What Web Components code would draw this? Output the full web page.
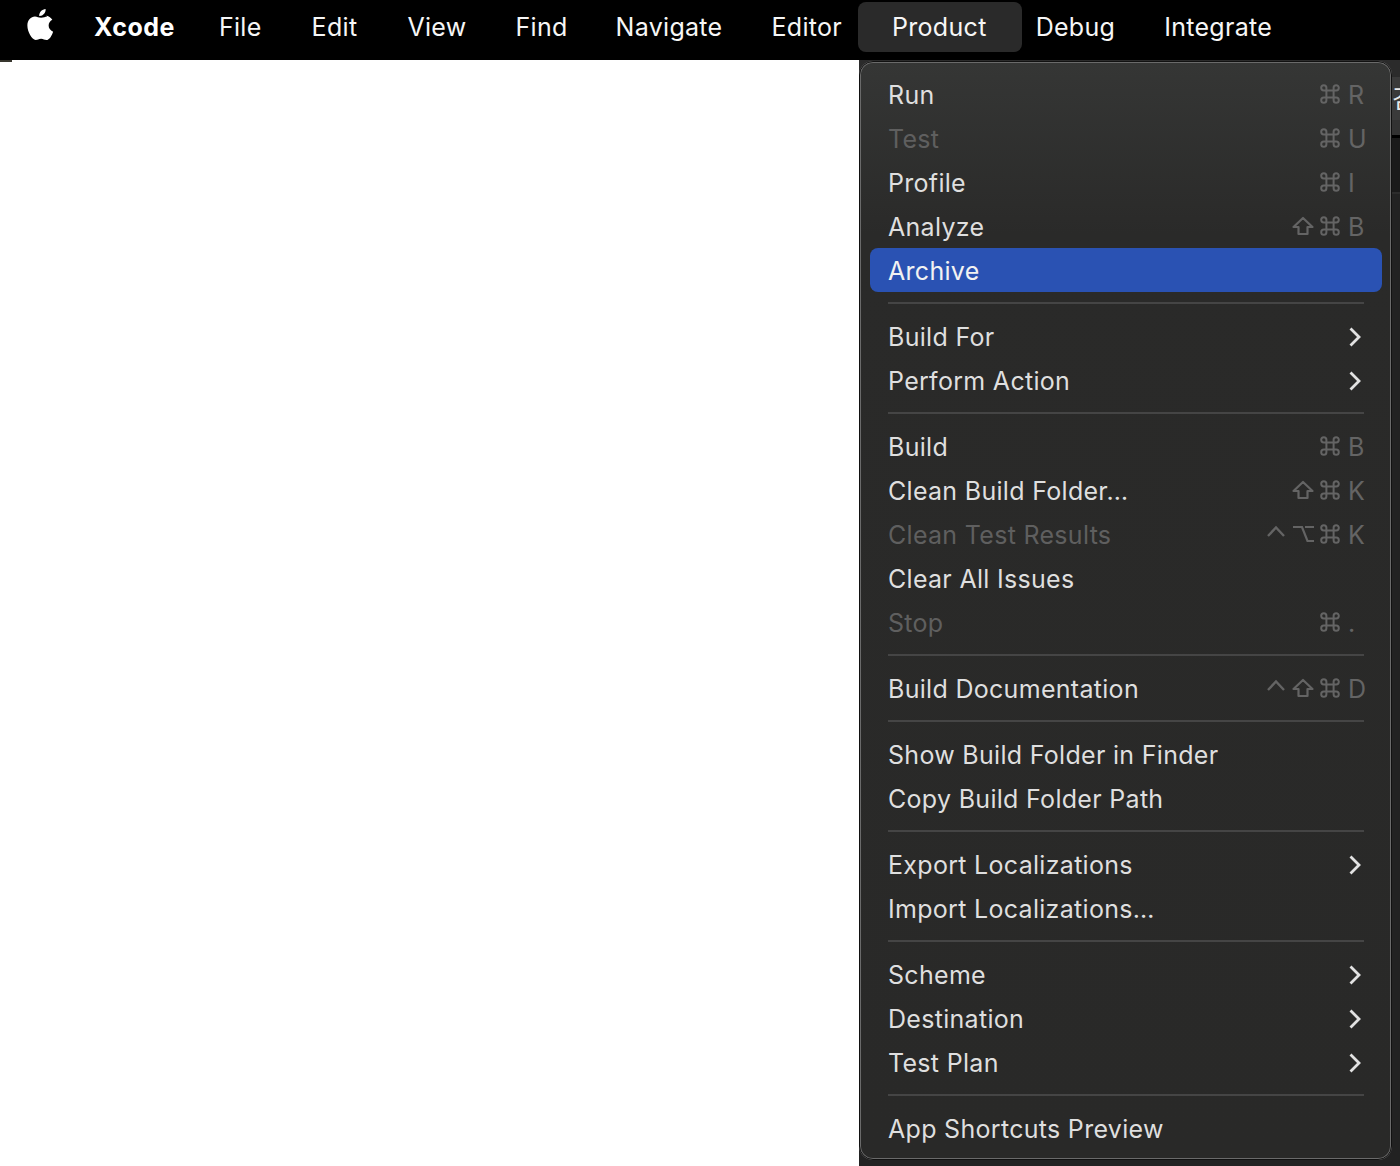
<!DOCTYPE html>
<html>
<head>
<meta charset="utf-8">
<title>Xcode Product menu</title>
<style>
  html, body { margin: 0; height: 100%; background: #fff; }
  body { font-family: Inter, "Liberation Sans", sans-serif; overflow: hidden; }
</style>
</head>
<body>
<xcode-desktop>
  <mac-menubar slot="bar">
    <bar-item app>Xcode</bar-item>
    <bar-item>File</bar-item>
    <bar-item>Edit</bar-item>
    <bar-item>View</bar-item>
    <bar-item style="margin-left:-1px">Find</bar-item>
    <bar-item style="margin-left:-2px">Navigate</bar-item>
    <bar-item style="margin-left:-1px">Editor</bar-item>
    <bar-item open>Product</bar-item>
    <bar-item>Debug</bar-item>
    <bar-item style="margin-left:-1px">Integrate</bar-item>
  </mac-menubar>
  <mac-menu slot="menu">
    <menu-row keys="cmd R">Run</menu-row>
    <menu-row keys="cmd U" disabled>Test</menu-row>
    <menu-row keys="cmd I">Profile</menu-row>
    <menu-row keys="shift cmd B">Analyze</menu-row>
    <menu-row active>Archive</menu-row>
    <menu-sep></menu-sep>
    <menu-row sub>Build For</menu-row>
    <menu-row sub>Perform Action</menu-row>
    <menu-sep></menu-sep>
    <menu-row keys="cmd B">Build</menu-row>
    <menu-row keys="shift cmd K">Clean Build Folder…</menu-row>
    <menu-row keys="ctrl opt cmd K" disabled>Clean Test Results</menu-row>
    <menu-row>Clear All Issues</menu-row>
    <menu-row keys="cmd ." disabled>Stop</menu-row>
    <menu-sep></menu-sep>
    <menu-row keys="ctrl shift cmd D">Build Documentation</menu-row>
    <menu-sep></menu-sep>
    <menu-row>Show Build Folder in Finder</menu-row>
    <menu-row>Copy Build Folder Path</menu-row>
    <menu-sep></menu-sep>
    <menu-row sub>Export Localizations</menu-row>
    <menu-row>Import Localizations…</menu-row>
    <menu-sep></menu-sep>
    <menu-row sub>Scheme</menu-row>
    <menu-row sub>Destination</menu-row>
    <menu-row sub>Test Plan</menu-row>
    <menu-sep></menu-sep>
    <menu-row>App Shortcuts Preview</menu-row>
  </mac-menu>
</xcode-desktop>

<script>
const ICONS = {
  cmd: '<svg width="22" height="20" viewBox="0 0 22 20" fill="none" stroke="currentColor" stroke-width="2"><path d="M7.400 6.400h7.200v7.200H7.400zM7.400 6.400V3.800a2.600 2.600 0 1 0-2.600 2.600h2.600M14.600 6.400V3.800a2.600 2.600 0 1 1 2.600 2.600h-2.600M7.400 13.600v2.600a2.600 2.600 0 1 1-2.600-2.600h2.600M14.600 13.600v2.600a2.600 2.600 0 1 0 2.600-2.600h-2.600"/></svg>',
  shift: '<svg width="24" height="20" viewBox="0 0 24 20" fill="none" stroke="currentColor" stroke-width="2.200" stroke-linejoin="round"><path d="M12 2 21.500 11h-5v7H7.500v-7h-5z"/></svg>',
  ctrl: '<svg width="20" height="20" viewBox="0 0 20 20" fill="none" stroke="currentColor" stroke-width="2.400"><path d="M2 12 10 3.500l8 8.500"/></svg>',
  opt: '<svg width="24" height="20" viewBox="0 0 24 20" fill="none" stroke="currentColor" stroke-width="2.200"><path d="M2 3h9l5.500 14H23M14 3h9"/></svg>'
};

class XcodeDesktop extends HTMLElement {
  constructor() {
    super();
    this.attachShadow({mode: 'open'}).innerHTML = `
      <style>
        :host { display: grid; grid-template-rows: 60px 1fr; height: 1166px; width: 1400px; position: relative; overflow: hidden; }
        .below { display: grid; grid-template-columns: 859px 1fr; }
        .white { background: #fff; }
        .strip { height: 2px; width: 12px; background: #38362e; }
        .behind { background: #222; display: flex; flex-direction: column; overflow: hidden; }
        .tab { flex: none; height: 17px; background: #2b2b2b; }
        .title { flex: none; box-sizing: border-box; height: 61px; background: linear-gradient(#3a3a3a 43px, #323232 43px); color: #e8e8e8; font: 25px "Noto Sans CJK KR", sans-serif; line-height: 40px; white-space: nowrap; padding-left: 533px; border-bottom: 3px solid #000; overflow: hidden; }
        .pane { flex: none; height: 54px; background: #1a1a1a; border-bottom: 2px solid #2c2c2c; }
      </style>
      <slot name="bar"></slot>
      <div class="below">
        <div class="white"><div class="strip"></div></div>
        <div class="behind"><div class="tab"></div><div class="title">검</div><div class="pane"></div></div>
      </div>
      <slot name="menu"></slot>`;
  }
}

class MacMenubar extends HTMLElement {
  constructor() {
    super();
    this.attachShadow({mode: 'open'}).innerHTML = `
      <style>
        :host { display: flex; align-items: flex-start; box-sizing: border-box; height: 60px; padding-top: 2px; background: #000; color: #f6f6f6; font-size: 25px; letter-spacing: .3px; }
        svg { width: 28px; height: 33px; margin: 6px 15px 0 26px; flex: none; }
      </style>
      <svg viewBox="0 0 28 34" fill="#fff"><path d="M21.600 8.800c-2.300 0-3.900 1.300-6.500 1.300-2.500 0-4-1.300-6.300-1.300C4.700 8.800 1 12.400 1 18.100c0 6.400 4.700 14.900 8.600 14.900 2 0 3-1.300 5.500-1.300s3.400 1.300 5.500 1.300c3 0 5.600-4.600 6.900-8.600-3-1.300-4.600-3.700-4.600-6.400 0-2.600 1.400-4.500 3.800-5.900-1.500-2.500-3.900-4.200-6.600-4.200zM19.800 1c.2 2.600-.8 4-1.900 5.300-1.100 1.200-2.500 2.200-4.700 2-.2-2.100.8-3.900 1.900-5.100C16.300 1.900 18 1.100 19.800 1z"/></svg>
      <slot></slot>`;
  }
}

class BarItem extends HTMLElement {
  constructor() {
    super();
    this.attachShadow({mode: 'open'}).innerHTML = `
      <style>
        :host { display: flex; align-items: center; height: 50px; padding: 0 25px; }
        :host([app]) { font-weight: 700; color: #fff; letter-spacing: .5px; padding: 0 19px 0 25px; }
        :host([open]) { background: #2a2a2a; border-radius: 8px; padding: 0 35px 0 34px; margin: 0 -11px 0 -9px; position: relative; }
      </style>
      <slot></slot>`;
  }
}

class MacMenu extends HTMLElement {
  constructor() {
    super();
    this.attachShadow({mode: 'open'}).innerHTML = `
      <style>
        :host {
          position: absolute; left: 859px; top: 61px;
          display: flex; flex-direction: column; box-sizing: border-box;
          width: 533px; height: 1099px; padding: 9px 8px 0 9px;
          border-radius: 14px; border: 2px solid #6a6a6a; outline: 1px solid #111; outline-offset: -1px;
          background: linear-gradient(#353635 0, #2a2a29 170px, #292928 100%);
        }
      </style>
      <slot></slot>`;
  }
}

class MenuRow extends HTMLElement {
  constructor() {
    super();
    this.attachShadow({mode: 'open'});
  }
  connectedCallback() {
    let right = '';
    if (this.hasAttribute('sub')) {
      right = '<svg class="chev" width="14" height="20" viewBox="0 0 14 20" fill="none" stroke="#e2e2e2" stroke-width="2.800"><path d="M2.500 1.500 11 10l-8.500 8.500"/></svg>';
    } else if (this.getAttribute('keys')) {
      right = this.getAttribute('keys').split(' ').map(k =>
        ICONS[k] ? `<span class="ico ${k}">${ICONS[k]}</span>` : `<span class="key">${k}</span>`
      ).join('');
    }
    this.shadowRoot.innerHTML = `
      <style>
        :host { display: flex; align-items: center; justify-content: space-between; box-sizing: border-box; height: 44px; padding: 2px 15px 0 18px; border-radius: 8px; color: #dfdfdf; font-size: 25px; letter-spacing: .3px; }
        :host([disabled]) { color: #5f5f5f; }
        :host([active]) { background: #2a52b3; color: #f2f2f2; }
        .keys { display: flex; align-items: center; color: #646464; }
        .ico { display: flex; margin-top: -2px; }
        .ctrl { margin-right: 5px; }
        .shift, .opt { margin-right: 4px; }
        .key { width: 19px; margin-left: 7px; text-align: left; }
        .chev { margin: 0 5px 0 0; }
      </style>
      <span><slot></slot></span>
      <span class="keys">${right}</span>`;
  }
}

class MenuSep extends HTMLElement {
  constructor() {
    super();
    this.attachShadow({mode: 'open'}).innerHTML = `
      <style>
        :host { display: flex; align-items: center; height: 22px; padding: 0 18px; }
        div { flex: 1; height: 2px; background: #454545; }
      </style>
      <div></div>`;
  }
}

customElements.define('xcode-desktop', XcodeDesktop);
customElements.define('mac-menubar', MacMenubar);
customElements.define('bar-item', BarItem);
customElements.define('mac-menu', MacMenu);
customElements.define('menu-row', MenuRow);
customElements.define('menu-sep', MenuSep);
</script>
</body>
</html>
